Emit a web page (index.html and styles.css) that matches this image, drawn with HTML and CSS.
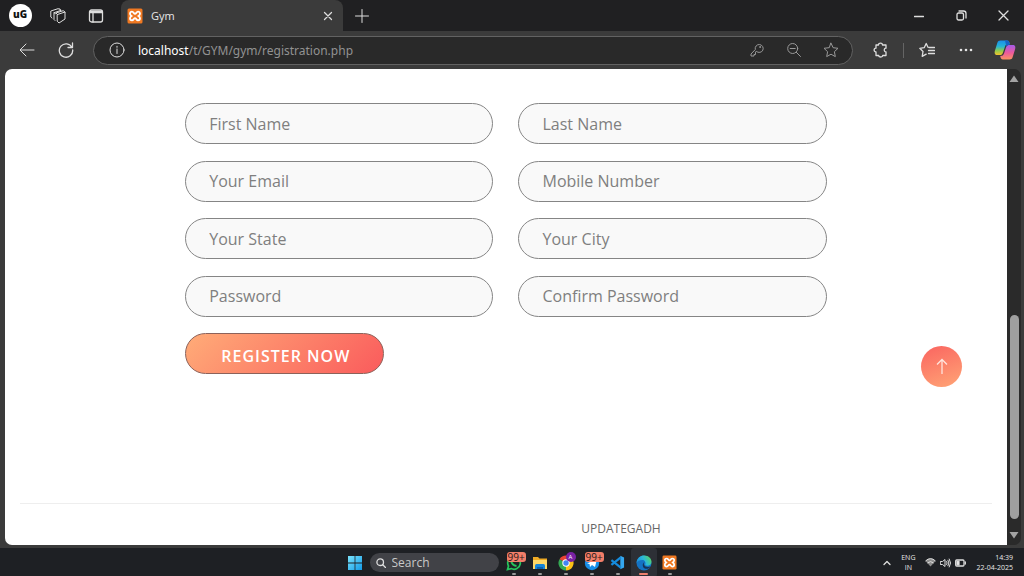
FILE: index.html
```html
<!DOCTYPE html>
<html lang="en">
<head>
<meta charset="utf-8">
<meta name="viewport" content="width=device-width, initial-scale=1">
<title>Gym</title>
<link rel="stylesheet" href="styles.css">
</head>
<body>
<svg class="defs" aria-hidden="true">
  <defs>
    <linearGradient id="win" x1="0" y1="0" x2="1" y2="1"><stop offset="0" stop-color="#7be3fb"/><stop offset="1" stop-color="#129be8"/></linearGradient>
    <linearGradient id="cpA" x1="0" y1="0" x2="0" y2="1"><stop offset="0" stop-color="#1b8fe8"/><stop offset=".4" stop-color="#25b3d8"/><stop offset=".7" stop-color="#8fcb4d"/><stop offset="1" stop-color="#f4c22b"/></linearGradient>
    <linearGradient id="cpB" x1="0" y1="0" x2="0" y2="1"><stop offset="0" stop-color="#a45be8"/><stop offset=".55" stop-color="#ee5a9a"/><stop offset="1" stop-color="#fb9360"/></linearGradient>
    <linearGradient id="edge" x1="0" y1=".6" x2="1" y2=".2"><stop offset="0" stop-color="#1b8ddd"/><stop offset=".5" stop-color="#2bb9d8"/><stop offset="1" stop-color="#5bd65a"/></linearGradient>
    <symbol id="xampp" viewBox="0 0 16 16">
      <rect x=".5" y=".5" width="15" height="15" rx="1.5" fill="#f07922"/>
      <path d="M5 3.700c-1.500 0-2 1-2 2 0 1.200.8 1.800 1.500 2.300C3.800 8.500 3 9.100 3 10.300c0 1.200.7 2 2 2 1.700 0 1.700-2.100 3-2.100s1.300 2.100 3 2.100c1.300 0 2-.8 2-2C13 9.100 12.200 8.500 11.500 8 12.200 7.500 13 6.900 13 5.700c0-1-.5-2-2-2-1.700 0-1.700 2.100-3 2.100S6.700 3.700 5 3.700Z" fill="none" stroke="#fff" stroke-width="1.800"/>
    </symbol>
  </defs>
</svg>

<header class="tabbar">
  <button class="cell" aria-label="Profile"><span class="avatar">uG</span></button>
  <button class="cell" aria-label="Workspaces">
    <svg width="16" height="16" viewBox="0 0 16 16" class="line"><path d="M7.500 6.500 15 4v7l-6 4-1.500-1.500zM15 4l-1.800-1.300L6 5l1.500 1.500M5 12.500 4 11.500V4.700L11.200 2.300 9.800 1.200M2 10 .8 9V3L8 .7l1.800.5M4 4.700l1.500 1"/></svg>
  </button>
  <button class="cell" aria-label="Tab actions">
    <svg width="16" height="16" viewBox="0 0 16 16" class="line bold"><rect x="1.500" y="2" width="13" height="12" rx="2"/><path d="M2 3.500h12M2 4.500h12M5 5v9"/></svg>
  </button>
  <div class="tab">
    <svg width="16" height="16"><use href="#xampp"/></svg>
    <span class="tab-title">Gym</span>
    <button class="tab-close" aria-label="Close tab"><svg width="10" height="10" viewBox="0 0 10 10" class="line bold"><path d="m1.500 1.500 7 7m0-7-7 7"/></svg></button>
  </div>
  <button class="cell" aria-label="New tab"><svg width="14" height="14" viewBox="0 0 14 14" class="line"><path d="M7 .5v13M.5 7h13"/></svg></button>
  <div class="window-controls">
    <button class="control" aria-label="Minimize"><svg width="10" height="10" viewBox="0 0 10 10" class="line bold"><path d="M.5 5.500h9"/></svg></button>
    <button class="control" aria-label="Restore"><svg width="11" height="11" viewBox="0 0 11 11" class="line bold"><rect x="1" y="3" width="6.500" height="7" rx="1.500"/><path d="M3 1h4.500Q10 1 10 3.500V8"/></svg></button>
    <button class="control" aria-label="Close"><svg width="11" height="11" viewBox="0 0 11 11" class="line bold"><path d="m1 1 9 9m0-9-9 9"/></svg></button>
  </div>
</header>

<nav class="toolbar">
  <button class="cell" aria-label="Back"><svg width="16" height="14" viewBox="0 0 16 14" class="line"><path d="M15 7H1.500M7 1 1 7l6 6"/></svg></button>
  <button class="cell" aria-label="Refresh"><svg width="16" height="16" viewBox="0 0 16 16" class="line bold"><path d="M14 5.500A6.700 6.700 0 1 0 14.700 8M14.500 1v4.500H10"/></svg></button>
  <div class="address">
    <svg width="16" height="16" viewBox="0 0 16 16" class="line"><circle cx="8" cy="8" r="7"/><path d="M8 7v4.500M8 4.300v1"/></svg>
    <span class="url"><span class="host">localhost</span>/t/GYM/gym/registration.php</span>
    <button class="tool" aria-label="Saved passwords"><svg width="14" height="14" viewBox="0 0 14 14" class="line"><path d="M6.500 8.500a4 4 0 1 0-1.200-2L1 11v2h3v-1.500h1.500V9.500z"/><circle cx="10" cy="4" r=".5"/></svg></button>
    <button class="tool" aria-label="Zoom out"><svg width="16" height="16" viewBox="0 0 16 16" class="line"><circle cx="6.700" cy="6.500" r="5"/><path d="M4.200 6.500h5M10.300 10.300l4.200 4.200"/></svg></button>
    <button class="tool" aria-label="Add to favorites"><svg width="16" height="16" viewBox="0 0 16 16" class="line"><path d="m8 1.200 2.100 4.500 4.900.6-3.600 3.400.9 4.900L8 12.200l-4.300 2.400.9-4.900L1 6.300l4.900-.6z"/></svg></button>
  </div>
  <button class="cell" aria-label="Extensions"><svg width="16" height="16" viewBox="0 0 16 16" class="line bold"><path d="M3 3h2.500C5.500.5 9.500.5 9.500 3H13v3.200c-2.300-.2-2.300 3.800 0 3.600V13.500H9.700c0 2-4 2-4 0H3V10C.5 10 .5 6.200 3 6.200z"/></svg></button>
  <span class="divider"></span>
  <button class="cell" aria-label="Favorites"><svg width="16" height="16" viewBox="0 0 16 16" class="line bold"><path d="M9 5.200 7.200 1.500 5.200 5.700.8 6.300 4 9.500l-.8 4.800 4-2.100M10 5.500h5.500M9.500 8.500h6M9.500 11.500h6"/></svg></button>
  <button class="cell" aria-label="Settings and more"><svg width="14" height="4" viewBox="0 0 14 4" fill="#e4e4e4"><circle cx="2" cy="2" r="1.300"/><circle cx="7" cy="2" r="1.300"/><circle cx="12" cy="2" r="1.300"/></svg></button>
  <button class="cell" aria-label="Copilot"><svg width="22" height="20" viewBox="0 0 22 20"><path d="M6.500.5H13c2 0 2.300 1.500 2.800 3.500h-2C12 4 11.500 5 11 6.500l-2 6C8.300 14.500 7.500 15 6 15H3C.5 15 .3 12.800 1 10.500L3.300 3C3.900 1.200 4.800.5 6.500.5Z" fill="url(#cpA)"/><path d="M15.500 19.500H9c-2 0-2.300-1.500-2.800-3.500 2.300 0 3.200-.8 3.800-2.500l2-6C12.700 5.500 13.500 5 15 5h4c2.500 0 2.700 2.200 2 4.500L18.700 17c-.6 1.800-1.500 2.500-3.200 2.500Z" fill="url(#cpB)"/><path d="M11 .5h2c2 0 2.300 1.500 2.800 4.500-2 0-2.800.5-3.300 2z" fill="#1762c5"/></svg></button>
</nav>

<div class="viewport">
  <main class="page">
    <form class="registration">
      <input class="field" type="text" placeholder="First Name" aria-label="First Name">
      <input class="field" type="text" placeholder="Last Name" aria-label="Last Name">
      <input class="field" type="email" placeholder="Your Email" aria-label="Your Email">
      <input class="field" type="tel" placeholder="Mobile Number" aria-label="Mobile Number">
      <input class="field" type="text" placeholder="Your State" aria-label="Your State">
      <input class="field" type="text" placeholder="Your City" aria-label="Your City">
      <input class="field" type="password" placeholder="Password" aria-label="Password">
      <input class="field" type="password" placeholder="Confirm Password" aria-label="Confirm Password">
      <button class="register" type="submit">REGISTER NOW</button>
    </form>
    <footer class="footer">UPDATEGADH</footer>
    <button class="to-top" aria-label="Back to top"><svg width="12" height="17" viewBox="0 0 12 17"><path d="M6 16V1.500M1 6.500l5-5 5 5" fill="none" stroke="#ffe4dc" stroke-width="1.300"/></svg></button>
  </main>
  <div class="scrollbar">
    <svg width="10" height="8" viewBox="0 0 10 8"><path d="M5 .5 9.500 7H.5z" fill="#a3a3a3"/></svg>
    <div class="thumb"></div>
    <svg width="10" height="8" viewBox="0 0 10 8"><path d="M5 7.500 9.500 1H.5z" fill="#a3a3a3"/></svg>
  </div>
</div>

<footer class="taskbar">
  <div class="apps">
    <button class="app" aria-label="Start"><svg width="14" height="14" viewBox="0 0 14 14" fill="url(#win)"><path d="M0 0h6.600v6.600H0zM7.400 0H14v6.600H7.400zM0 7.400h6.600V14H0zM7.400 7.400H14V14H7.400z"/></svg></button>
    <label class="search">
      <svg width="10" height="10" viewBox="0 0 10 10" class="line bold"><circle cx="4.200" cy="4.200" r="3.300"/><path d="m6.700 6.700 2.800 2.800"/></svg>
      <input type="search" placeholder="Search" aria-label="Search">
    </label>
    <button class="app running" aria-label="WhatsApp"><svg width="16" height="16" viewBox="0 0 16 16"><path d="m1.500 14.500 1-3.500A6.300 6.300 0 1 1 5.200 13.600z" fill="none" stroke="#25c45c" stroke-width="1.700"/><path d="M5 5.500c.5 3 2.500 5 5.500 5.500" fill="none" stroke="#25c45c" stroke-width="1.800"/></svg><span class="badge">99+</span></button>
    <button class="app running" aria-label="File Explorer"><svg width="16" height="14" viewBox="0 0 16 14"><path d="M1 1h5l1.500 1.500H15V13H1z" fill="#efab25"/><path d="M1 4h14v9H1z" fill="#ffd767"/><path d="M3 13V9.500Q3 8 4.500 8h7Q13 8 13 9.500V13z" fill="#1684d8"/><path d="M5 11h6v2H5z" fill="#0c5fac"/></svg></button>
    <button class="app running" aria-label="Chrome"><svg width="16" height="16" viewBox="0 0 16 16"><path d="M8 8 1.500 4.200A7.500 7.500 0 0 1 14.500 4.200z" fill="#ea4335"/><path d="M8 8 14.500 4.200A7.500 7.500 0 0 1 8 15.500z" fill="#fbc116"/><path d="M8 8v7.500A7.500 7.500 0 0 1 1.500 4.200z" fill="#34a853"/><circle cx="8" cy="8" r="3.700" fill="#fff"/><circle cx="8" cy="8" r="2.700" fill="#4285f4"/></svg><span class="user-badge">A</span></button>
    <button class="app running" aria-label="Messenger"><svg width="16" height="16" viewBox="0 0 16 16"><circle cx="8" cy="8" r="7.200" fill="#168ee9"/><path d="M3 8.500 13 4l-2 8-3-2-2 2-.5-3z" fill="#fff"/></svg><span class="badge">99+</span></button>
    <button class="app running" aria-label="Visual Studio Code"><svg width="15" height="15" viewBox="0 0 16 16"><path d="M11 .8 15 2.700v10.600L11 15.200z" fill="#35a8f1"/><path d="M1.500 5.500 11.500 13.500M1.500 10.500 11.500 2.500" stroke="#158bdc" stroke-width="2.400"/></svg></button>
    <button class="app running active" aria-label="Edge"><svg width="16" height="16" viewBox="0 0 16 16"><circle cx="8" cy="8" r="7.500" fill="#1473c4"/><path d="M.6 7C1.300 3 4.500.5 8 .5c4.500 0 7.500 3 7.500 6.300 0 2.700-2 4-4.200 4-2 0-2.500-.8-2-1.500C10 7 8.500 5 6.300 5 3.500 5 1.500 6 .6 8z" fill="url(#edge)"/><path d="M8.500 7c-1.500 1.500-.5 5 3.500 5 1.200 0 2-.3 2.800-.8-1.300 2.100-4 3.300-6 2.300C6.300 12.200 6 8.500 8.500 7Z" fill="#163457"/></svg></button>
    <button class="app running" aria-label="XAMPP"><svg width="15" height="15"><use href="#xampp"/></svg></button>
  </div>
  <div class="tray">
    <svg class="line bold" width="8" height="6" viewBox="0 0 8 6"><path d="m1 4.500 3-3 3 3"/></svg>
    <div class="language">ENG<br>IN</div>
    <div class="status">
      <svg width="11" height="9" viewBox="0 0 11 9"><path d="M.5 3Q5.500-1.800 10.500 3L5.500 8.500z" fill="#8d8d8d"/><path d="M.5 3Q5.500-1.800 10.500 3M2.500 5Q5.500 2.200 8.500 5" fill="none" stroke="#ddd"/></svg>
      <svg width="11" height="10" viewBox="0 0 11 10" class="line"><path d="M.7 3.500h1.800L5 1.500v7l-2.500-2H.7zM6.700 3.500Q7.800 5 6.700 6.500M8 2.200Q10 5 8 7.800M9.300 1Q12 5 9.300 9"/></svg>
      <svg width="11" height="8" viewBox="0 0 11 8" class="line bold"><rect x=".7" y="1" width="8.300" height="6" rx="1"/><path d="M10.300 3v2"/><path d="M2 2.500h2v3H2z" fill="#fff"/></svg>
    </div>
    <div class="clock"><time>14:39</time><br><time datetime="2025-04-22">22-04-2025</time></div>
  </div>
</footer>
</body>
</html>
```
FILE: styles.css
```css
* {
  box-sizing: border-box;
}

body {
  display: flex;
  flex-direction: column;
  height: 100vh;
  margin: 0;
  overflow: hidden;
  background: #3b3b3b;
  color: #e8e8e8;
  font-family: "Open Sans", "Noto Sans", sans-serif;
}

button {
  padding: 0;
  border: 0;
  background: none;
  color: inherit;
  font: inherit;
}

svg {
  display: block;
  flex: none;
}

.defs {
  position: absolute;
  width: 0;
  height: 0;
}

.line {
  fill: none;
  stroke: #dedede;
  stroke-width: 1;
  stroke-linejoin: round;
  stroke-linecap: round;
}

.bold {
  stroke-width: 1.3;
}

/* Browser tabs */

.tabbar {
  display: flex;
  flex: none;
  height: 31px;
  background: #202022;
}

.cell {
  display: flex;
  flex: none;
  align-items: center;
  justify-content: center;
  width: 38px;
}

.avatar {
  width: 23px;
  height: 23px;
  border-radius: 50%;
  background: #fff;
  color: #111;
  font-size: 10px;
  font-weight: 800;
  line-height: 21px;
}

.tab {
  display: flex;
  align-items: center;
  width: 222px;
  margin-left: 6px;
  padding: 0 8px 0 6px;
  border-radius: 8px 8px 0 0;
  background: #3b3b3b;
}

.tabbar .cell:first-child {
  margin-left: 1px;
}

.tab-title {
  flex: 1;
  padding-left: 8px;
  font-size: 11px;
}

.tab-close {
  display: flex;
  align-items: center;
  justify-content: center;
  width: 14px;
  height: 14px;
}

.window-controls {
  display: flex;
  margin-left: auto;
}

.control {
  display: flex;
  align-items: center;
  justify-content: center;
  width: 42px;
}

/* Browser toolbar */

.toolbar {
  display: flex;
  flex: none;
  align-items: center;
  height: 38px;
  padding-left: 7px;
}

.toolbar .cell {
  width: 39px;
}

.address {
  display: flex;
  flex: 1;
  align-items: center;
  height: 29px;
  margin: 0 8px;
  padding: 0 3px 0 15px;
  border: 1px solid #626262;
  border-radius: 15px;
  background: #292929;
}

.url {
  flex: 1;
  padding-left: 13px;
  color: #929292;
  font-family: "Noto Sans", sans-serif;
  font-size: 12px;
}

.host {
  color: #fff;
}

.tool {
  display: flex;
  align-items: center;
  justify-content: center;
  width: 37px;
}

.tool .line {
  stroke: #999;
}

.divider {
  width: 1px;
  height: 15px;
  margin: 0 3px;
  background: #656565;
}

/* Page */

.viewport {
  display: flex;
  flex: 1;
  min-height: 0;
  margin: 0 3px 3px 5px;
  border-radius: 7px;
  overflow: hidden;
}

.page {
  position: relative;
  display: flex;
  flex: 1;
  flex-direction: column;
  justify-content: space-between;
  padding: 34px 15px 0;
  background: #fff;
}

.registration {
  display: grid;
  grid-template-columns: 1fr 1fr;
  column-gap: 25px;
  align-content: space-between;
  width: 66%;
  min-height: 271px;
  margin: 0 auto;
}

.field {
  width: 100%;
  height: 41px;
  padding: 0 23px;
  border: 1px solid #858585;
  border-radius: 21px;
  background: #f9f9f9;
  color: #444;
  font-family: inherit;
  font-size: 16px;
}

.field::placeholder {
  color: #7f7f7f;
}

.register {
  justify-self: start;
  height: 41px;
  padding: 4px 33px 0 35px;
  border: 1px solid #8c625a;
  border-radius: 21px;
  background: linear-gradient(135deg, #ffac78, #fa5b5c);
  color: #fff;
  font-size: 16px;
  font-weight: 600;
  letter-spacing: 1px;
}

.footer {
  padding: 16px 0 8px 230px;
  border-top: 1px solid #eee;
  color: #666;
  font-size: 12px;
  line-height: 17px;
  text-align: center;
}

.to-top {
  position: absolute;
  right: 45px;
  bottom: 158px;
  display: flex;
  align-items: center;
  justify-content: center;
  width: 41px;
  height: 41px;
  border-radius: 50%;
  background: linear-gradient(160deg, #fa6460, #ffa576);
}

.scrollbar {
  display: flex;
  flex-direction: column;
  align-items: center;
  justify-content: space-between;
  width: 14px;
  padding: 6px 0;
  background: #2a2a2a;
}

.thumb {
  width: 9px;
  height: 44%;
  margin: auto 0 12px;
  border-radius: 5px;
  background: #9f9f9f;
}

/* Desktop taskbar */

.taskbar {
  display: grid;
  grid-template-columns: 1fr auto 1fr;
  flex: none;
  height: 28px;
  background: #1e2024;
}

.apps {
  display: flex;
  grid-column: 2;
}

.app {
  position: relative;
  display: flex;
  align-items: center;
  justify-content: center;
  width: 26px;
}

.running::after {
  content: "";
  position: absolute;
  bottom: 2px;
  width: 4px;
  height: 2px;
  border-radius: 1px;
  background: #999;
}

.active {
  border-radius: 3px;
  background: #2d3036;
}

.active::after {
  width: 9px;
  background: #ee806d;
}

.badge {
  position: absolute;
  top: 4px;
  left: 6px;
  padding: 0 1px;
  border-radius: 3px;
  background: #f27e69;
  color: #281b1a;
  font-size: 10px;
  line-height: 10px;
}

.user-badge {
  position: absolute;
  top: 4px;
  right: 3px;
  width: 10px;
  height: 10px;
  border-radius: 50%;
  background: #7921a5;
  color: #fff;
  font-size: 6px;
  line-height: 10px;
}

.search {
  display: flex;
  align-items: center;
  width: 129px;
  height: 19px;
  margin: 5px 2px;
  padding: 0 6px;
  border-radius: 10px;
  background: #414247;
}

.search input {
  flex: 1;
  min-width: 0;
  padding: 0 0 0 6px;
  border: 0;
  outline: 0;
  background: none;
  color: #ddd;
  font-family: inherit;
  font-size: 12px;
}

.search input::placeholder {
  color: #c9c9c9;
}

.tray {
  display: flex;
  align-items: center;
  justify-content: flex-end;
  gap: 10px;
  padding-right: 11px;
  font-size: 7px;
  line-height: 10px;
}

.language {
  text-align: center;
}

.status {
  display: flex;
  align-items: center;
  gap: 4px;
}

.clock {
  text-align: right;
}
```
